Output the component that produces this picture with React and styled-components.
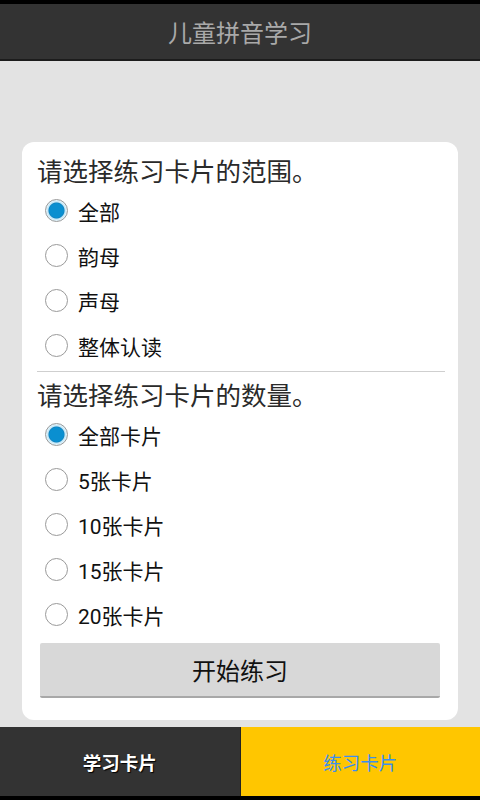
import React, { useState } from "react";
import styled, { createGlobalStyle } from "styled-components";

const Global = createGlobalStyle`
  body {
    margin: 0;
    font-family: "Roboto", "Noto Sans CJK SC", sans-serif;
  }
`;

const Screen = styled.div`
  width: 480px;
  height: 800px;
  display: flex;
  flex-direction: column;
  background: #000;
`;

const StatusBar = styled.div`
  height: 4px;
  background: #000;
`;

const TitleBar = styled.div`
  height: 55px;
  background: #333333;
  border-bottom: 2px solid #1c1c1c;
  display: flex;
  align-items: center;
  justify-content: center;
  color: #a9a9a9;
  font-size: 24px;
`;

const Main = styled.div`
  flex: 1;
  background: #e3e3e3;
  padding: 81px 22px 7px;
  display: flex;
`;

const Card = styled.div`
  flex: 1;
  background: #fff;
  border-radius: 12px;
  padding: 14px 15px 22px;
  display: flex;
  flex-direction: column;
`;

const Heading = styled.div`
  font-size: 25.5px;
  line-height: 32px;
  color: #2a2a2a;
  white-space: nowrap;
  margin-top: ${(p) => p.$top || 0}px;
`;

const Row = styled.label`
  height: 45px;
  display: flex;
  align-items: center;
  gap: 10px;
  padding-left: 8px;
  font-size: 21px;
  color: #111;
  cursor: pointer;
`;

const Circle = styled.span`
  width: 23px;
  height: 23px;
  flex: none;
  box-sizing: border-box;
  border-radius: 50%;
  border: 1px solid #9a9a9a;
  background: ${(p) =>
    p.$on
      ? "radial-gradient(circle, #0a8fd0 0 7px, #0a7fbd 7.5px, #bfe4f5 8.5px, #dff2fb 10px)"
      : "#fff"};
`;

const Divider = styled.div`
  height: 1px;
  background: #cfcfcf;
  margin: 3px -2px 0 0;
`;

const StartButton = styled.button`
  margin: 6px 3px 0;
  height: 55px;
  border: none;
  border-bottom: 2px solid #a8a8a8;
  border-radius: 2px;
  background: #d8d8d8;
  font-family: inherit;
  font-size: 24px;
  color: #111;
`;

const TabBar = styled.div`
  height: 69px;
  display: flex;
  border-bottom: 4px solid #000;
`;

const Tab = styled.div`
  flex: 1;
  display: flex;
  align-items: center;
  justify-content: center;
  font-size: 18.5px;
  background: ${(p) => (p.$active ? "#ffc600" : "#333333")};
  color: ${(p) => (p.$active ? "#3b8ef0" : "#fff")};
  font-weight: ${(p) => (p.$active ? 400 : 700)};
  text-shadow: ${(p) => (p.$active ? "none" : "1px 1px 1px #000")};
  border-left: ${(p) => (p.$active ? "1px solid #222" : "none")};
`;

const ranges = ["全部", "韵母", "声母", "整体认读"];
const counts = ["全部卡片", "5张卡片", "10张卡片", "15张卡片", "20张卡片"];

const Radio = ({ label, on, onPick }) => (
  <Row onClick={onPick}>
    <Circle $on={on} />
    {label}
  </Row>
);

export default function App() {
  const [range, setRange] = useState(0);
  const [count, setCount] = useState(0);

  return (
    <Screen>
      <Global />
      <StatusBar />
      <TitleBar>儿童拼音学习</TitleBar>
      <Main>
        <Card>
          <Heading>请选择练习卡片的范围。</Heading>
          {ranges.map((r, i) => (
            <Radio key={r} label={r} on={range === i} onPick={() => setRange(i)} />
          ))}
          <Divider />
          <Heading $top={8}>请选择练习卡片的数量。</Heading>
          {counts.map((c, i) => (
            <Radio key={c} label={c} on={count === i} onPick={() => setCount(i)} />
          ))}
          <StartButton>开始练习</StartButton>
        </Card>
      </Main>
      <TabBar>
        <Tab>学习卡片</Tab>
        <Tab $active>练习卡片</Tab>
      </TabBar>
    </Screen>
  );
}
